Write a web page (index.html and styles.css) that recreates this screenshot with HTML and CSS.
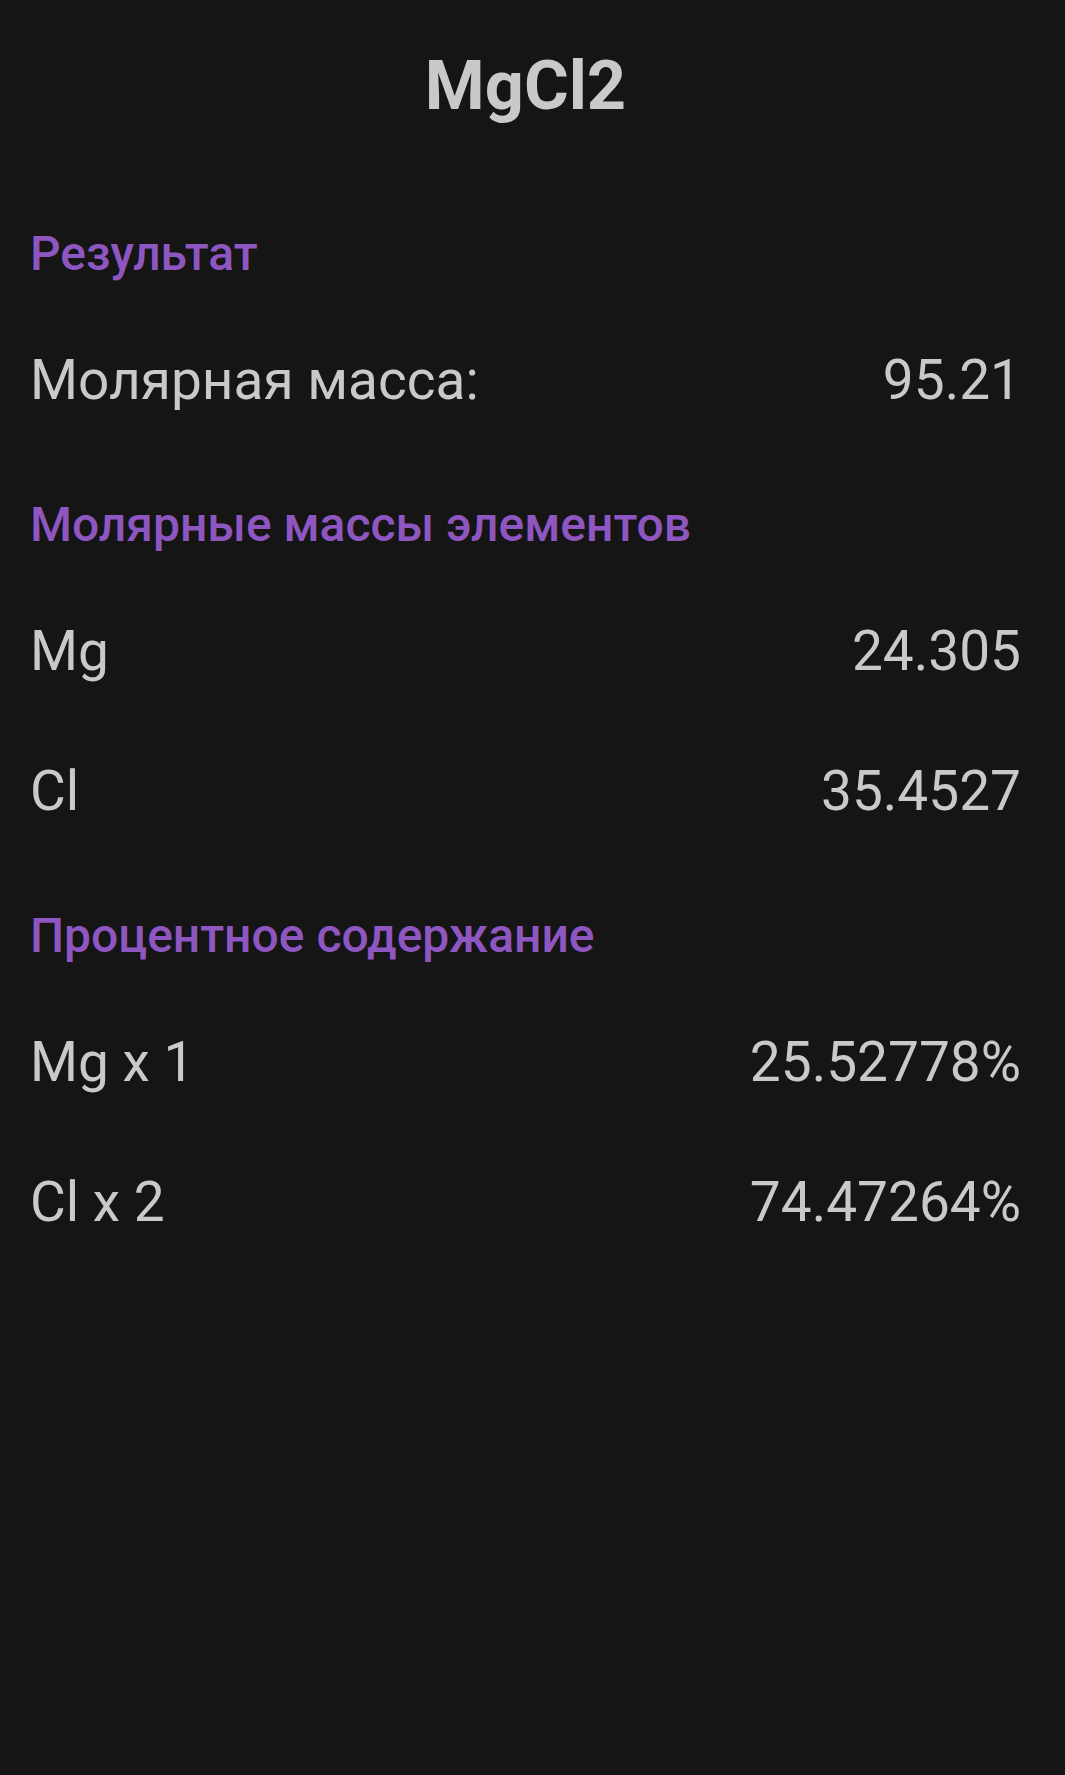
FILE: index.html
```html
<!DOCTYPE html>
<html lang="ru">
<head>
<meta charset="utf-8">
<link rel="stylesheet" href="styles.css">
</head>
<body>
<div class="screen">
  <h1 class="title">MgCl2</h1>

  <section class="section section-first">
    <h2 class="section-title">Результат</h2>
    <div class="row"><span class="label">Молярная масса:</span><span class="value">95.21</span></div>
  </section>

  <section class="section">
    <h2 class="section-title">Молярные массы элементов</h2>
    <div class="row"><span class="label">Mg</span><span class="value">24.305</span></div>
    <div class="row"><span class="label">Cl</span><span class="value">35.4527</span></div>
  </section>

  <section class="section">
    <h2 class="section-title">Процентное содержание</h2>
    <div class="row"><span class="label">Mg x 1</span><span class="value">25.52778%</span></div>
    <div class="row"><span class="label">Cl x 2</span><span class="value">74.47264%</span></div>
  </section>
</div>
</body>
</html>
```

FILE: styles.css
```css
html, body {
  margin: 0;
  padding: 0;
  background: #151515;
}
body {
  font-family: Roboto, "Noto Sans", sans-serif;
  color: #c9c9c9;
  min-height: 1775px;
}
.screen {
  padding: 45px 44px 0 30px;
}
.title {
  margin: 0;
  font-size: 68.5px;
  line-height: 82px;
  font-weight: 700;
  text-align: center;
  color: #c9c9c9;
}
.section {
  margin-top: 44.5px;
}
.section-first {
  margin-top: 96.5px;
}
.section-title {
  margin: 0;
  padding-bottom: 26.6px;
  font-size: 48px;
  line-height: 60px;
  font-weight: 500;
  color: #8e56c0;
}
.row {
  display: flex;
  justify-content: space-between;
  align-items: center;
  height: 140px;
  font-size: 55px;
  line-height: 140px;
}
.value {
  text-align: right;
}
```
